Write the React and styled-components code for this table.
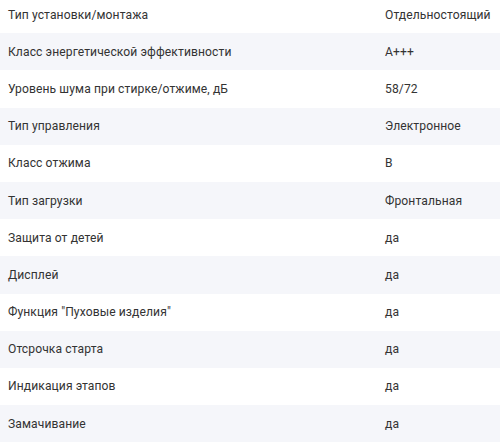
import React from 'react'
import styled, { createGlobalStyle } from 'styled-components'

const GlobalStyle = createGlobalStyle`
  html, body {
    margin: 0;
    padding: 0;
    background: #ffffff;
  }
  body {
    font-family: Roboto, "Noto Sans", sans-serif;
    -webkit-font-smoothing: antialiased;
  }
`

const SpecsTable = styled.div`
  display: flex;
  flex-direction: column;
  margin-top: -4px;
  width: 500px;
`

const SpecRow = styled.div`
  align-items: center;
  background: ${props => (props.$shaded ? '#f5f6fa' : '#ffffff')};
  display: grid;
  grid-template-columns: 377px 1fr;
  height: 37.2px;
`

const SpecCell = styled.div`
  color: #333333;
  font-size: 12.1px;
  letter-spacing: 0.1px;
  line-height: 16px;
  padding: 0 8px;
  white-space: nowrap;
`

const specs = [
  ['Тип установки/монтажа', 'Отдельностоящий'],
  ['Класс энергетической эффективности', 'A+++'],
  ['Уровень шума при стирке/отжиме, дБ', '58/72'],
  ['Тип управления', 'Электронное'],
  ['Класс отжима', 'B'],
  ['Тип загрузки', 'Фронтальная'],
  ['Защита от детей', 'да'],
  ['Дисплей', 'да'],
  ['Функция "Пуховые изделия"', 'да'],
  ['Отсрочка старта', 'да'],
  ['Индикация этапов', 'да'],
  ['Замачивание', 'да'],
]

const App = () => (
  <>
    <GlobalStyle />
    <SpecsTable>
      {specs.map(([label, value], index) => (
        <SpecRow key={label} $shaded={index % 2 === 1}>
          <SpecCell>{label}</SpecCell>
          <SpecCell>{value}</SpecCell>
        </SpecRow>
      ))}
    </SpecsTable>
  </>
)

export default App
